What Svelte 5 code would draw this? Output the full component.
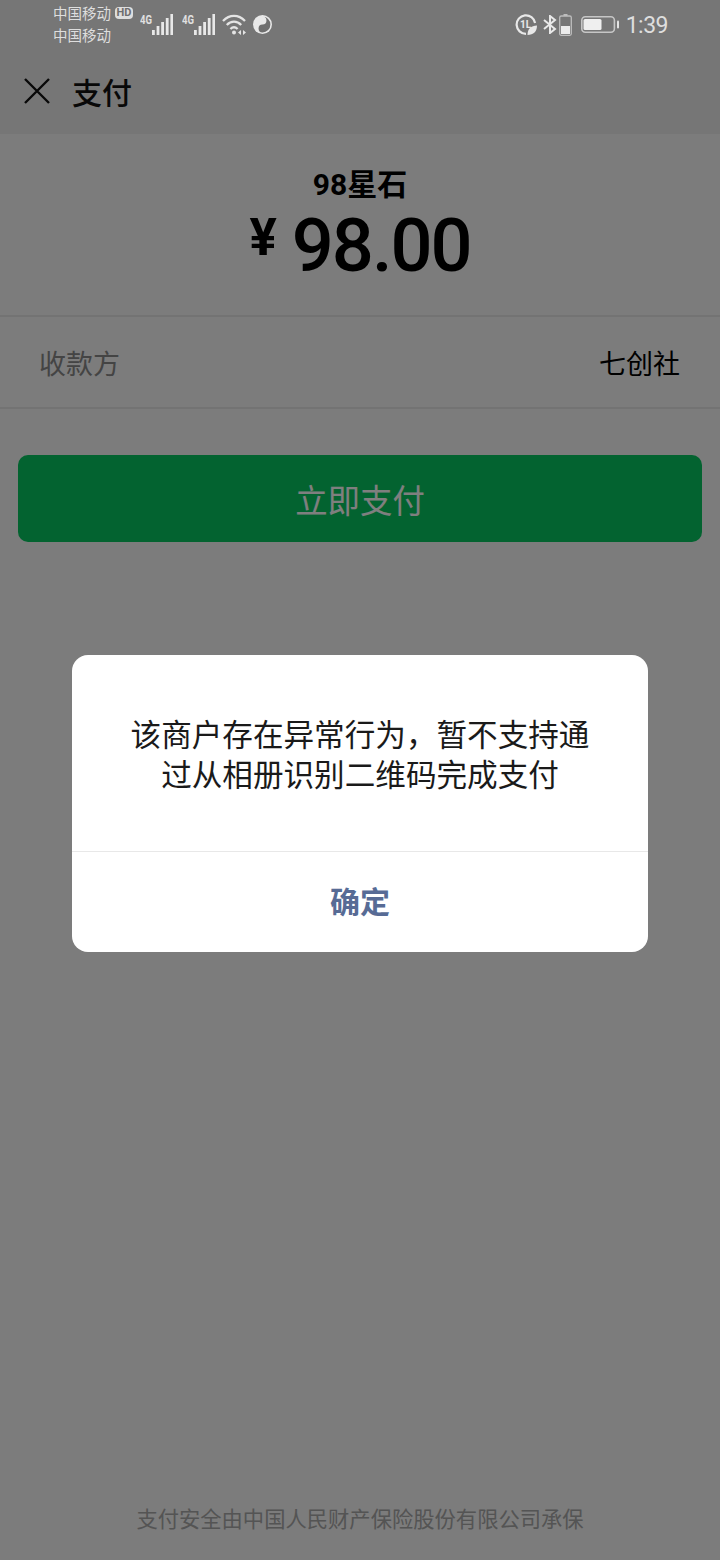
<script>
  const rows = [{ label: "收款方", value: "七创社" }];
  const bars = [
    { x: 12, h: 5 },
    { x: 16.6, h: 9 },
    { x: 21.2, h: 13 },
    { x: 25.8, h: 17 },
    { x: 30.4, h: 21 }
  ];
</script>

<div class="page">
  <header class="top">
    <div class="status-spacer"></div>
    <div class="nav">
      <svg class="close" viewBox="0 0 26 26" width="26" height="26">
        <path d="M1 1 L25 25 M25 1 L1 25" stroke="#121212" stroke-width="2.4" fill="none" />
      </svg>
      <span class="nav-title">支付</span>
    </div>
  </header>

  <section class="summary">
    <div class="item">98星石</div>
    <div class="amount"><span class="yen">¥</span><span>98.00</span></div>
  </section>

  <section class="rows">
    {#each rows as row}
      <div class="row">
        <span class="label">{row.label}</span>
        <span class="value">{row.value}</span>
      </div>
    {/each}
  </section>

  <div class="action">
    <div class="pay">立即支付</div>
  </div>

  <footer class="foot">支付安全由中国人民财产保险股份有限公司承保</footer>

  <div class="mask">
    <div class="dialog">
      <p class="msg">该商户存在异常行为，暂不支持通过从相册识别二维码完成支付</p>
      <div class="ok">确定</div>
    </div>
  </div>

  <div class="status">
    <div class="status-left">
      <div class="carriers">
        <div class="carrier">中国移动<span class="hd">HD</span></div>
        <div class="carrier">中国移动</div>
      </div>
      {#each [0, 1] as sim}
        <svg class="signal" viewBox="0 0 33 21" width="33" height="21">
          <text class="lte" x="0" y="10" textLength="12" lengthAdjust="spacingAndGlyphs">4G</text>
          {#each bars as bar}
            <rect x={bar.x} y={21 - bar.h} width="2.8" height={bar.h} fill="#e8e8e8" />
          {/each}
        </svg>
      {/each}
      <svg class="wifi" viewBox="0 0 25 21" width="25" height="21" fill="none" stroke="#e4e4e4" stroke-width="2.3">
        <path d="M1 7 C7.5 .2 16.5 .2 23 7" />
        <path d="M4.8 11 C9 6.6 15 6.6 19.2 11" />
        <path d="M8.4 15 C10.6 12.8 13.4 12.8 15.6 15" />
        <circle cx="12" cy="18.4" r="2" fill="#e4e4e4" stroke="none" />
        <path d="M19 16 L16 18.5 L19 21 Z M21 16 L24 18.5 L21 21 Z" fill="#e4e4e4" stroke="none" />
      </svg>
      <svg class="yy" viewBox="0 0 19 19" width="19" height="19">
        <circle cx="9.5" cy="9.5" r="9.5" fill="#e8e8e8" />
        <path d="M9.5 1.6 A7.9 7.9 0 0 1 9.5 17.4 A3.95 3.95 0 0 1 9.5 9.5 A3.95 3.95 0 0 0 9.5 1.6" fill="#6f6f6f" />
        <circle cx="9.5" cy="5.5" r="1.4" fill="#e8e8e8" />
        <circle cx="9.5" cy="13.5" r="1.4" fill="#6f6f6f" />
      </svg>
    </div>
    <div class="status-right">
      <svg class="data" viewBox="0 0 22 21" width="22" height="21">
        <path d="M11 19.9 A9.3 9.3 0 1 1 20.1 9" fill="none" stroke="#e8e8e8" stroke-width="2.2" />
        <path d="M12.5 21 C12.5 15 16 11.5 22 11.5 C22 17.5 18.5 21 12.5 21 Z" fill="#e8e8e8" />
        <text x="5" y="14" class="data-text">1L</text>
      </svg>
      <svg class="bt" viewBox="0 0 14 19" width="14" height="19" fill="none" stroke="#e8e8e8" stroke-width="2">
        <path d="M1 5 L12 14 L7 18 V1 L12 5 L1 14" />
      </svg>
      <svg class="small-batt" viewBox="0 0 13 22" width="13" height="22">
        <rect x="4.5" y="0" width="4" height="2" fill="#bdbdbd" />
        <rect x=".7" y="2" width="11.6" height="19.3" rx="1.5" fill="none" stroke="#bdbdbd" stroke-width="1.3" />
        <rect x="2" y="12" width="9" height="8" fill="#ebebeb" />
      </svg>
      <svg class="batt" viewBox="0 0 38 17" width="38" height="17">
        <rect x=".8" y=".8" width="32.6" height="15.4" rx="3.5" fill="none" stroke="#c6c6c6" stroke-width="1.6" />
        <rect x="2.5" y="3" width="18" height="11" rx="1.5" fill="#efefef" />
        <rect x="36" y="4.5" width="2" height="8" rx="1" fill="#e4e4e4" />
      </svg>
      <span class="time">1:39</span>
    </div>
  </div>
</div>

<style>
  :global(body) {
    margin: 0;
  }

  .page {
    position: relative;
    display: flex;
    flex-direction: column;
    width: 720px;
    height: 1560px;
    background: #f8f8f8;
    color: #000;
    font-family: "Noto Sans CJK SC", "Roboto", sans-serif;
    overflow: hidden;
  }

  .top {
    height: 134px;
    background: #ededed;
  }

  .status-spacer {
    height: 48px;
  }

  .nav {
    display: flex;
    align-items: center;
    gap: 22px;
    height: 86px;
    padding-left: 24px;
  }

  .nav-title {
    font-size: 30px;
    font-weight: 500;
    line-height: 1;
    color: #111;
  }

  .summary {
    display: flex;
    flex-direction: column;
    align-items: center;
    height: 183px;
    box-sizing: border-box;
    padding-top: 31px;
    border-bottom: 2px solid #e6e6e6;
  }

  .item {
    font-size: 30px;
    font-weight: 700;
    line-height: 40px;
    font-family: "Roboto", "Noto Sans CJK SC", sans-serif;
  }

  .amount {
    display: flex;
    align-items: flex-start;
    gap: 15px;
    margin-top: 5px;
    font-family: "Roboto", sans-serif;
    font-size: 74px;
    font-weight: 500;
    line-height: 72px;
    letter-spacing: -2px;
  }

  .yen {
    font-size: 51px;
    line-height: 55px;
    font-weight: 700;
    letter-spacing: 0;
  }

  .row {
    display: flex;
    justify-content: space-between;
    align-items: center;
    height: 92px;
    box-sizing: border-box;
    padding: 0 40px;
    border-bottom: 2px solid #e6e6e6;
    font-size: 27px;
  }

  .label {
    color: #888;
    margin-left: -1px;
  }

  .action {
    padding: 46px 18px 0;
  }

  .pay {
    display: flex;
    align-items: center;
    justify-content: center;
    height: 87px;
    border-radius: 10px;
    background: #07c660;
    color: #fff;
    font-size: 32.4px;
  }

  .foot {
    margin-top: auto;
    padding-bottom: 28px;
    text-align: center;
    font-size: 21.3px;
    line-height: 28px;
    color: #a8a8a8;
  }

  .mask {
    position: absolute;
    inset: 0;
    display: flex;
    justify-content: center;
    padding-top: 655px;
    box-sizing: border-box;
    background: rgba(0, 0, 0, 0.5);
  }

  .dialog {
    width: 576px;
    height: 297px;
    border-radius: 16px;
    background: #fff;
    display: flex;
    flex-direction: column;
  }

  .msg {
    flex: 1;
    margin: 0;
    padding: 58px 56px 0;
    text-align: center;
    font-size: 30.6px;
    line-height: 40px;
    color: #1a1a1a;
  }

  .ok {
    display: flex;
    align-items: center;
    justify-content: center;
    height: 101px;
    padding-bottom: 5px;
    box-sizing: border-box;
    border-top: 1px solid #e8e8e8;
    color: #576b95;
    font-size: 30px;
    font-weight: 700;
  }

  .status {
    position: absolute;
    top: 0;
    left: 0;
    right: 0;
    height: 49px;
    display: flex;
    justify-content: space-between;
    align-items: center;
    padding: 0 52px 0 53px;
    color: #dedede;
  }

  .status-left,
  .status-right {
    display: flex;
    align-items: center;
  }

  .carriers {
    margin-top: -2px;
  }

  .carrier {
    display: flex;
    align-items: center;
    font-size: 14.5px;
    line-height: 22px;
  }

  .hd {
    width: 18px;
    margin-left: 4px;
    border-radius: 4px;
    background: #dedede;
    color: #6e6e6e;
    text-align: center;
    font-family: "Roboto", sans-serif;
    font-size: 11px;
    font-weight: 700;
    line-height: 12px;
  }

  .signal {
    margin-left: 7px;
  }

  .signal + .signal {
    margin-left: 9px;
  }

  .lte {
    font-family: "Roboto", sans-serif;
    font-size: 12px;
    font-weight: 700;
    fill: #e0e0e0;
  }

  .wifi {
    margin-left: 7px;
  }

  .yy {
    margin-left: 6px;
  }

  .data-text {
    font-family: "Roboto", sans-serif;
    font-size: 10px;
    font-weight: 700;
    fill: #e8e8e8;
  }

  .bt {
    margin-left: 6px;
  }

  .small-batt {
    margin-left: 2px;
  }

  .batt {
    margin-left: 9px;
  }

  .time {
    margin-left: 7px;
    margin-top: 2px;
    font-family: "Roboto", sans-serif;
    font-size: 23px;
    letter-spacing: -0.5px;
    line-height: 1;
  }
</style>
